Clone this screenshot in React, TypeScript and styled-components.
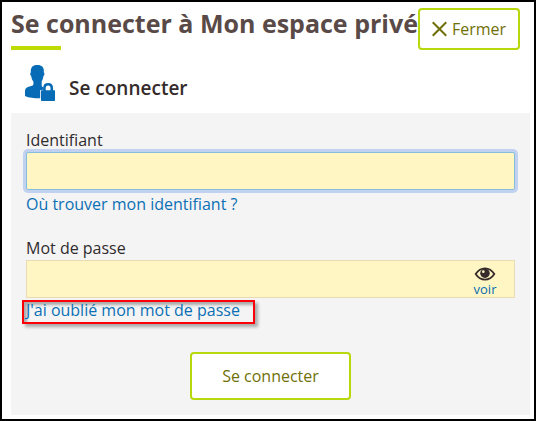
import React from "react";
import styled, { createGlobalStyle } from "styled-components";

const GlobalStyle = createGlobalStyle`
  * { box-sizing: border-box; }
  body { margin: 0; background: #fff; font-family: "Open Sans", "Noto Sans", sans-serif; }
  button, input { font-family: inherit; }
`;

const Dialog = styled.main`
  width: 536px;
  height: 421px;
  border: 2px solid #000;
  background: #fff;
  padding: 6px 4px 4px 9px;
  display: flex;
  flex-direction: column;
  overflow: hidden;
`;

const Header = styled.header`
  display: flex;
  height: 42px;
  padding-right: 10px;
`;

const Heading = styled.div`
  width: 407px;
  flex: none;
  display: flex;
  flex-direction: column;
  justify-content: space-between;
`;

const Title = styled.h1`
  margin: 0;
  font-size: 25px;
  line-height: 30px;
  font-weight: 700;
  color: #594a47;
  white-space: nowrap;
`;

const Accent = styled.div`
  width: 50px;
  height: 4px;
  background: #bedb06;
`;

const OutlineButton = styled.button<{ $width: number; $height: number }>`
  width: ${(p) => p.$width}px;
  height: ${(p) => p.$height}px;
  flex: none;
  display: flex;
  align-items: center;
  justify-content: center;
  gap: 5px;
  padding: 0;
  border: 2px solid #b8d80b;
  border-radius: 4px;
  background: #fff;
  color: #707008;
  font-size: 16px;
  line-height: 22px;
`;

const Subheader = styled.div`
  display: flex;
  height: 63px;
  padding: 15px 0 0 14px;
  gap: 13px;
`;

const Subtitle = styled.h2`
  margin: 10px 0 0;
  font-size: 19px;
  line-height: 26px;
  font-weight: 600;
  color: #352b2b;
`;

const Form = styled.form`
  height: 302px;
  width: 519px;
  background: #f4f4f4;
  padding: 16px 15px 0;
  display: flex;
  flex-direction: column;
`;

const Field = styled.div`
  height: 108px;
  display: flex;
  flex-direction: column;
  align-items: flex-start;
`;

const Label = styled.label`
  height: 23px;
  font-size: 16px;
  line-height: 22px;
  color: #302b2d;
`;

const InputBox = styled.div<{ $focused?: boolean }>`
  width: 489px;
  height: 38px;
  flex: none;
  display: flex;
  background: #fff6c4;
  border: 1px solid ${(p) => (p.$focused ? "#87bddc" : "#eadbb5")};
  border-radius: ${(p) => (p.$focused ? 2 : 0)}px;
  box-shadow: ${(p) => (p.$focused ? "0 0 0 3px #c1d1f0" : "none")};
`;

const Input = styled.input`
  flex: 1;
  min-width: 0;
  border: 0;
  padding: 0 10px;
  background: transparent;
  outline: none;
  font-size: 16px;
`;

const Reveal = styled.button`
  width: 58px;
  padding: 6px 0 0;
  border: 0;
  background: transparent;
  display: flex;
  flex-direction: column;
  align-items: center;
  color: #076cb2;
  font-size: 13px;
  line-height: 16px;
`;

const Link = styled.a`
  margin-top: 3px;
  font-size: 16px;
  line-height: 22px;
  color: #0c70b5;
  white-space: nowrap;
`;

const Highlight = styled.div`
  width: 233px;
  height: 24px;
  flex: none;
  margin: 2px 0 0 -4px;
  padding-left: 2px;
  border: 2px solid #fb0007;
  box-shadow: 3px 3px 3px rgba(0, 0, 0, 0.3), inset 3px 3px 3px rgba(0, 0, 0, 0.3);
  ${Link} {
    display: block;
    margin-top: -3px;
  }
`;

const Actions = styled.div`
  display: flex;
  padding: 7px 0 0 164px;
`;

const CloseIcon = () => (
  <svg width="15" height="16" viewBox="0 0 15 16" fill="none" stroke="#707008" strokeWidth="2.2">
    <path d="M.7 1.2 14.3 14.8M14.3 1.2.7 14.8" />
  </svg>
);

const UserLockIcon = () => (
  <svg width="31" height="37" viewBox="0 0 31 37">
    <path
      d="M5.9 7.2C5.2 2.6 7.8 0 12.3 0s7.2 2.6 6.5 7.2c1 .8.7 3-.3 3.9-.5 2.8-1 4.1-1.8 5.2v4.1c0 1 .8 1.5 1.7 2-.4.8-.6 1.7-.6 2.6h-2.6v8.3C10.7 33.4 4 33 0 31v-4c0-4.2 2.2-4.8 6-5.9 1.8-.6 2.4-1.2 2.4-2.2v-2.3c-1.1-1.1-1.7-2.7-2.2-5.5-1.1-.9-1.4-3.1-.3-3.9Z"
      fill="#076cb5"
    />
    <path d="M19.4 27v-3.8c0-2.8 1.2-4 3.7-4s3.7 1.2 3.7 4V27" fill="none" stroke="#076cb5" strokeWidth="2.6" />
    <rect x="16" y="25.2" width="14" height="10.7" rx=".6" fill="#076cb5" />
  </svg>
);

const EyeIcon = () => (
  <svg width="22" height="15" viewBox="0 0 22 15">
    <path d="M1 7.5C6.2-.6 15.8-.6 21 7.5c-5.2 8-14.8 8-20 0Z" fill="none" stroke="#352b2a" strokeWidth="1.9" />
    <circle cx="11" cy="6.7" r="5.1" fill="#352b2a" />
    <circle cx="9.2" cy="5" r="1.4" fill="#fff6c4" />
  </svg>
);

export default function App() {
  return (
    <>
      <GlobalStyle />
      <Dialog>
        <Header>
          <Heading>
            <Title>Se connecter à Mon espace privé</Title>
            <Accent />
          </Heading>
          <OutlineButton $width={102} $height={42} type="button">
            <CloseIcon />
            Fermer
          </OutlineButton>
        </Header>
        <Subheader>
          <UserLockIcon />
          <Subtitle>Se connecter</Subtitle>
        </Subheader>
        <Form onSubmit={(e) => e.preventDefault()}>
          <Field>
            <Label htmlFor="identifiant">Identifiant</Label>
            <InputBox $focused>
              <Input id="identifiant" />
            </InputBox>
            <Link>Où trouver mon identifiant ?</Link>
          </Field>
          <Field>
            <Label htmlFor="password">Mot de passe</Label>
            <InputBox>
              <Input id="password" type="password" />
              <Reveal type="button">
                <EyeIcon />
                voir
              </Reveal>
            </InputBox>
            <Highlight>
              <Link>J'ai oublié mon mot de passe</Link>
            </Highlight>
          </Field>
          <Actions>
            <OutlineButton $width={161} $height={48} type="submit">
              Se connecter
            </OutlineButton>
          </Actions>
        </Form>
      </Dialog>
    </>
  );
}
